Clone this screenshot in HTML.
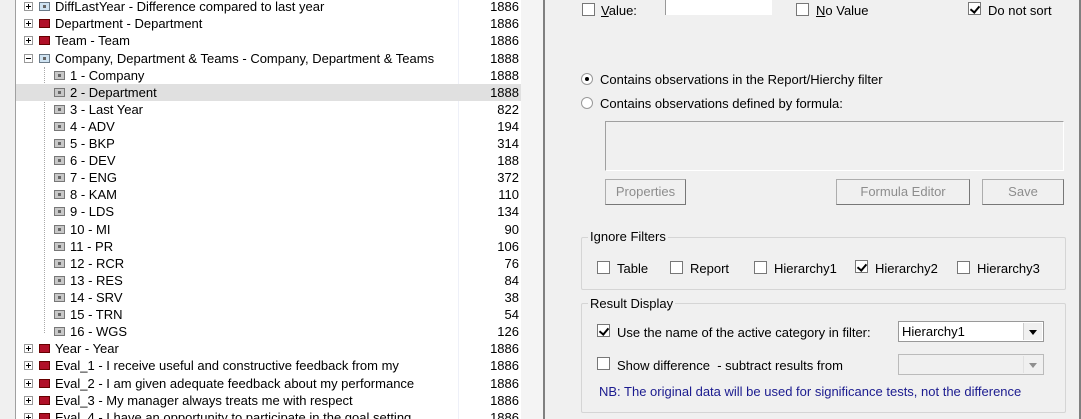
<!DOCTYPE html>
<html><head><style>
*{box-sizing:border-box;margin:0;padding:0}
html,body{width:1081px;height:419px;overflow:hidden}
body{background:#f0f0f0;font-family:"Liberation Sans",Arial,sans-serif;font-size:13px;color:#000;position:relative}
.a{position:absolute;white-space:nowrap}
#left{position:absolute;left:0;top:0;width:16px;height:419px;background:#f0f0f0;border-right:1px solid #a0a0a0}
#tree{position:absolute;left:16px;top:0;width:505px;height:419px;background:#fff}
#sb{position:absolute;left:521px;top:0;width:22px;height:419px;background:#f4f4f4}
#sbl{position:absolute;left:543px;top:0;width:2px;height:419px;background:#808080}
#rb{position:absolute;left:1079px;top:0;width:2px;height:419px;background:#808080}
.row{position:absolute;left:16px;width:505px;height:17px;line-height:17px}
.sel{background:#e0e0e0}
.num{position:absolute;right:2px;top:0}
.pl{position:absolute;top:4px;width:9px;height:9px;border:1px solid #999;background:#fff}
.pl:before{content:"";position:absolute;left:1px;top:3px;width:5px;height:1px;background:#000}
.pl.p:after{content:"";position:absolute;left:3px;top:1px;width:1px;height:5px;background:#000}
.ic{position:absolute;top:4px;width:11px;height:9px;border:1px solid #555}
.ic.b{background:#cfe3f2;border-color:#6a7a88}
.ic.r{background:#b01028;border-color:#600}
.ic.g{background:#c8c8c8;border-color:#777}
.ic.g:after,.ic.b:after{content:"";position:absolute;left:3px;top:2px;width:3px;height:3px;background:#666}
.t{position:absolute;top:0}
.vl{position:absolute;left:44px;width:0;border-left:1px dotted #aaa}
.cb{position:absolute;width:13px;height:13px;background:#fff;border:1px solid #777}
.cb.k:after{content:"";position:absolute;left:3px;top:1px;width:4px;height:7px;border:solid #000;border-width:0 2px 2px 0;transform:rotate(40deg)}
.rd{position:absolute;width:12px;height:12px;border-radius:50%;background:#fff;border:1px solid #999}
.rd.k:after{content:"";position:absolute;left:3px;top:3px;width:4px;height:4px;border-radius:50%;background:#000}
.btn{position:absolute;height:26px;border:1px solid #adadad;border-right-color:#777;border-bottom-color:#777;background:#f0f0f0;color:#8d8d8d;text-align:center;line-height:24px}
.grp{position:absolute;border:1px solid #d5d5d5;border-radius:2px}
.leg{position:absolute;background:#f0f0f0;padding:0 2px}
.sel2{position:absolute;width:146px;height:21px;border:1px solid #999;background:#fff;line-height:19px;padding-left:3px}
.dd{position:absolute;right:1px;top:1px;width:19px;height:17px;background:#f0f0f0;border-left:1px solid #ccc}
.dd:after{content:"";position:absolute;left:5px;top:7px;border:4px solid transparent;border-top:5px solid #000;border-bottom:0}
</style></head><body>
<div id="left"></div><div id="tree"></div><div id="sb"></div><div id="sbl"></div><div id="rb"></div>
<div class="a" style="left:458px;top:0;width:1px;height:419px;background:#eef0f8"></div>
<div class="vl" style="top:67px;height:266px"></div>

<div class="row" style="top:-2px"><span class="pl p" style="left:8px"></span><span class="ic b" style="left:23px"></span><span class="t" style="left:39px">DiffLastYear - Difference compared to last year</span><span class="num">1886</span></div>
<div class="row" style="top:15px"><span class="pl p" style="left:8px"></span><span class="ic r" style="left:23px"></span><span class="t" style="left:39px">Department - Department</span><span class="num">1886</span></div>
<div class="row" style="top:32px"><span class="pl p" style="left:8px"></span><span class="ic r" style="left:23px"></span><span class="t" style="left:39px">Team - Team</span><span class="num">1886</span></div>
<div class="row" style="top:50px"><span class="pl" style="left:8px"></span><span class="ic b" style="left:23px"></span><span class="t" style="left:39px">Company, Department &amp; Teams - Company, Department &amp; Teams</span><span class="num">1888</span></div>
<div class="row" style="top:67px"><span class="ic g" style="left:38px"></span><span class="t" style="left:54px">1 - Company</span><span class="num">1888</span></div>
<div class="row sel" style="top:84px"><span class="ic g" style="left:38px"></span><span class="t" style="left:54px">2 - Department</span><span class="num">1888</span></div>
<div class="row" style="top:101px"><span class="ic g" style="left:38px"></span><span class="t" style="left:54px">3 - Last Year</span><span class="num">822</span></div>
<div class="row" style="top:118px"><span class="ic g" style="left:38px"></span><span class="t" style="left:54px">4 - ADV</span><span class="num">194</span></div>
<div class="row" style="top:135px"><span class="ic g" style="left:38px"></span><span class="t" style="left:54px">5 - BKP</span><span class="num">314</span></div>
<div class="row" style="top:152px"><span class="ic g" style="left:38px"></span><span class="t" style="left:54px">6 - DEV</span><span class="num">188</span></div>
<div class="row" style="top:169px"><span class="ic g" style="left:38px"></span><span class="t" style="left:54px">7 - ENG</span><span class="num">372</span></div>
<div class="row" style="top:186px"><span class="ic g" style="left:38px"></span><span class="t" style="left:54px">8 - KAM</span><span class="num">110</span></div>
<div class="row" style="top:203px"><span class="ic g" style="left:38px"></span><span class="t" style="left:54px">9 - LDS</span><span class="num">134</span></div>
<div class="row" style="top:221px"><span class="ic g" style="left:38px"></span><span class="t" style="left:54px">10 - MI</span><span class="num">90</span></div>
<div class="row" style="top:238px"><span class="ic g" style="left:38px"></span><span class="t" style="left:54px">11 - PR</span><span class="num">106</span></div>
<div class="row" style="top:255px"><span class="ic g" style="left:38px"></span><span class="t" style="left:54px">12 - RCR</span><span class="num">76</span></div>
<div class="row" style="top:272px"><span class="ic g" style="left:38px"></span><span class="t" style="left:54px">13 - RES</span><span class="num">84</span></div>
<div class="row" style="top:289px"><span class="ic g" style="left:38px"></span><span class="t" style="left:54px">14 - SRV</span><span class="num">38</span></div>
<div class="row" style="top:306px"><span class="ic g" style="left:38px"></span><span class="t" style="left:54px">15 - TRN</span><span class="num">54</span></div>
<div class="row" style="top:323px"><span class="ic g" style="left:38px"></span><span class="t" style="left:54px">16 - WGS</span><span class="num">126</span></div>
<div class="row" style="top:340px"><span class="pl p" style="left:8px"></span><span class="ic r" style="left:23px"></span><span class="t" style="left:39px">Year - Year</span><span class="num">1886</span></div>
<div class="row" style="top:357px"><span class="pl p" style="left:8px"></span><span class="ic r" style="left:23px"></span><span class="t" style="left:39px">Eval_1 - I receive useful and constructive feedback from my</span><span class="num">1886</span></div>
<div class="row" style="top:375px"><span class="pl p" style="left:8px"></span><span class="ic r" style="left:23px"></span><span class="t" style="left:39px">Eval_2 - I am given adequate feedback about my performance</span><span class="num">1886</span></div>
<div class="row" style="top:392px"><span class="pl p" style="left:8px"></span><span class="ic r" style="left:23px"></span><span class="t" style="left:39px">Eval_3 - My manager always treats me with respect</span><span class="num">1886</span></div>
<div class="row" style="top:409px"><span class="pl p" style="left:8px"></span><span class="ic r" style="left:23px"></span><span class="t" style="left:39px">Eval_4 - I have an opportunity to participate in the goal setting</span><span class="num">1886</span></div>

<div class="cb" style="left:582px;top:3px"></div><div class="a" style="left:601px;top:3px"><u>V</u>alue:</div>
<div class="a" style="left:665px;top:-2px;width:107px;height:17px;background:#fff;border-left:1px solid #999"></div>
<div class="cb" style="left:796px;top:3px"></div><div class="a" style="left:816px;top:3px"><u>N</u>o Value</div>
<div class="cb k" style="left:968px;top:2px"></div><div class="a" style="left:988px;top:3px">Do not sort</div>

<div class="rd k" style="left:581px;top:73px"></div><div class="a" style="left:600px;top:72px">Contains observations in the Report/Hierchy filter</div>
<div class="rd" style="left:581px;top:97px"></div><div class="a" style="left:600px;top:96px">Contains observations defined by formula:</div>
<div class="a" style="left:605px;top:121px;width:459px;height:50px;border:1px solid #a0a0a0;border-right-color:#fff;border-bottom-color:#fff"></div>
<div class="btn" style="left:605px;top:179px;width:81px">Properties</div>
<div class="btn" style="left:836px;top:179px;width:134px">Formula Editor</div>
<div class="btn" style="left:982px;top:179px;width:82px">Save</div>

<div class="grp" style="left:581px;top:237px;width:485px;height:53px"></div>
<div class="leg a" style="left:588px;top:229px">Ignore Filters</div>
<div class="cb" style="left:597px;top:261px"></div><div class="a" style="left:617px;top:261px">Table</div>
<div class="cb" style="left:670px;top:261px"></div><div class="a" style="left:690px;top:261px">Report</div>
<div class="cb" style="left:754px;top:261px"></div><div class="a" style="left:774px;top:261px">Hierarchy1</div>
<div class="cb k" style="left:855px;top:260px"></div><div class="a" style="left:875px;top:261px">Hierarchy2</div>
<div class="cb" style="left:957px;top:261px"></div><div class="a" style="left:977px;top:261px">Hierarchy3</div>

<div class="grp" style="left:581px;top:303px;width:485px;height:110px"></div>
<div class="leg a" style="left:588px;top:296px">Result Display</div>
<div class="cb k" style="left:597px;top:324px"></div><div class="a" style="left:617px;top:325px">Use the name of the active category in filter:</div>
<div class="sel2" style="left:898px;top:321px">Hierarchy1<span class="dd"></span></div>
<div class="cb" style="left:597px;top:357px"></div><div class="a" style="left:617px;top:358px">Show difference &nbsp;- subtract results from</div>
<div class="sel2" style="left:898px;top:354px;background:#f0f0f0;border-color:#bbb"><span class="dd" style="opacity:.4"></span></div>
<div class="a" style="left:599px;top:384px;color:#1b1b8f">NB: The original data will be used for significance tests, not the difference</div>
</body></html>
